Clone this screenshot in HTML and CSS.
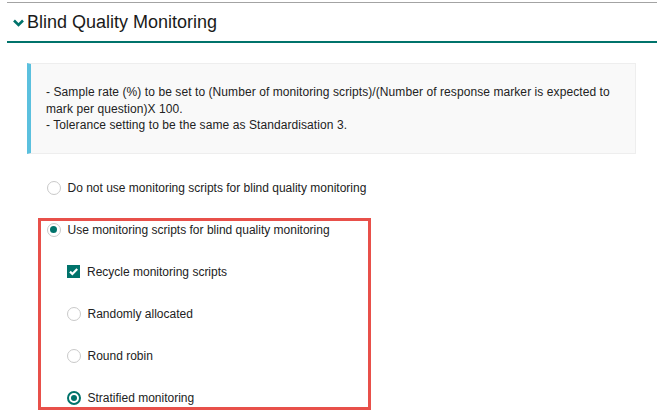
FILE: index.html
```html
<!DOCTYPE html>
<html>
<head>
<meta charset="utf-8">
<link rel="stylesheet" href="styles.css">
</head>
<body>
<div class="panel">
  <div class="panel-head">
    <svg class="chevron" width="11" height="8" viewBox="0 0 11 8"><path d="M1 1.5 L5.5 6 L10 1.5" fill="none" stroke="#00736b" stroke-width="2.6"/></svg>
    <span class="title">Blind Quality Monitoring</span>
  </div>
  <div class="info">
    <div>- Sample rate (%) to be set to (Number of monitoring scripts)/(Number of response marker is expected to mark per question)X 100.</div>
    <div>- Tolerance setting to be the same as Standardisation 3.</div>
  </div>
  <div class="options">
    <div class="opt plain"><span class="radio"></span><span class="lbl">Do not use monitoring scripts for blind quality monitoring</span></div>
    <div class="highlight">
      <div class="opt"><span class="radio on"></span><span class="lbl">Use monitoring scripts for blind quality monitoring</span></div>
      <div class="opt sub"><span class="check"><svg width="13" height="13" viewBox="0 0 13 13"><path d="M3 6.6 L5.4 9 L10.2 4" fill="none" stroke="#fff" stroke-width="2.2"/></svg></span><span class="lbl">Recycle monitoring scripts</span></div>
      <div class="opt sub"><span class="radio"></span><span class="lbl">Randomly allocated</span></div>
      <div class="opt sub"><span class="radio"></span><span class="lbl">Round robin</span></div>
      <div class="opt sub"><span class="radio on focus"></span><span class="lbl">Stratified monitoring</span></div>
    </div>
  </div>
</div>
</body>
</html>
```
FILE: styles.css
```css
html, body { margin: 0; padding: 0; background: #fff; }
body { font-family: "Liberation Sans", Arial, sans-serif; color: #222; }
.panel { margin: 2px 4px 0 7px; border-top: 1px solid #a3a3a3; }
.panel-head { height: 38px; border-bottom: 2px solid #00736b; display: flex; align-items: center; padding-left: 6px; }
.chevron { margin-right: 3px; margin-top: 2px; }
.title { font-size: 18px; color: #1a1a1a; }
.info { margin: 20px 21px 0 20px; background: #f9f9f9; border: 1px solid #eeeeee; border-left: 4px solid #5bc0de; padding: 20px 12px 19px 15px; font-size: 12px; letter-spacing: 0.08px; line-height: 16.5px; color: #222; }
.options { margin-left: 31px; }
.opt { display: flex; align-items: center; height: 16px; font-size: 12px; }
.plain { margin-top: 26px; padding-left: 9px; }
.highlight { margin-top: 22px; width: 333px; box-sizing: border-box; border: 3px solid #e8504a; padding: 1px 6px 1px; display: flex; flex-direction: column; gap: 26px; }
.sub { padding-left: 20px; }
.radio { width: 14px; height: 14px; box-sizing: border-box; border: 1px solid #c9c9c9; border-radius: 50%; background: #fff; display: inline-flex; align-items: center; justify-content: center; flex: none; margin-left: -0.5px; }
.radio.on::after { content: ""; width: 7px; height: 7px; border-radius: 50%; background: #00736b; }
.radio.focus { border: 2px solid #00736b; }
.radio.focus::after { width: 6px; height: 6px; }
.check { width: 13px; height: 13px; background: #00736b; display: inline-flex; flex: none; }
.lbl { margin-left: 7px; }
```
